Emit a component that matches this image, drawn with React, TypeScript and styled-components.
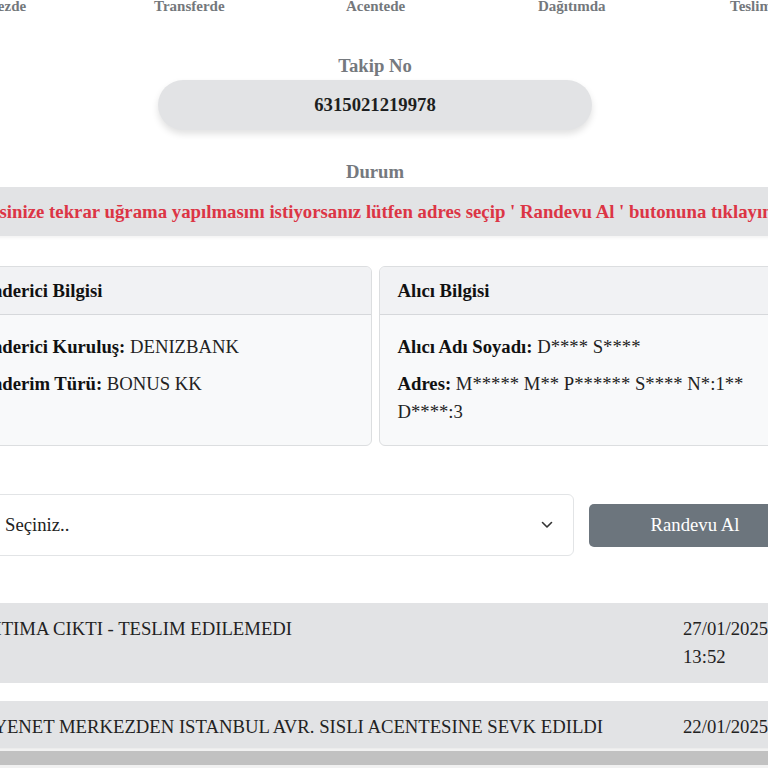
import React from 'react'
import styled, {createGlobalStyle} from 'styled-components'

const GlobalStyle = createGlobalStyle`
  html, body {
    margin: 0;
    padding: 0;
    background: #ffffff;
    overflow: hidden;
  }

  body {
    font-family: "Liberation Serif", "Times New Roman", serif;
    color: #212529;
  }

  * {
    box-sizing: border-box;
  }
`

// the text of the reference renders a bit wider than plain 18px
const TEXT = '18.7px'

const Page = styled.div`
  width: 1000px;
  margin: -4px 0 0 -125px;
`

const StatusRow = styled.div`
  width: 960px;
  margin: 0 auto;
  display: grid;
  grid-template-columns: repeat(5, 192px);
`

const StatusLabel = styled.div`
  padding-left: 67px;
  font-size: 15px;
  line-height: 20px;
  font-weight: 700;
  color: #74787c;
  white-space: nowrap;
`

const FieldLabel = styled.div<{$top: number}>`
  margin-top: ${(p) => p.$top}px;
  text-align: center;
  font-size: ${TEXT};
  line-height: 22px;
  font-weight: 700;
  color: #75797e;
`

const TrackingPill = styled.div`
  width: 434px;
  height: 50px;
  margin: 3px auto 0;
  border-radius: 25px;
  background: #e2e3e5;
  box-shadow: 0 4px 7px rgba(0, 0, 0, 0.12);
  display: flex;
  align-items: center;
  justify-content: center;
  font-size: ${TEXT};
  font-weight: 700;
  color: #1d1f21;
`

const Notice = styled.div`
  margin-top: 4px;
  height: 49px;
  background: #e2e3e5;
  box-shadow: 0 2px 3px rgba(0, 0, 0, 0.05);
  display: flex;
  align-items: center;
  justify-content: center;
  font-size: 18.8px;
  font-weight: 700;
  color: #dc3545;
  white-space: nowrap;
`

const Container = styled.div<{$top: number}>`
  width: 852px;
  margin: ${(p) => p.$top}px auto 0;
`

const CardGrid = styled.div`
  display: grid;
  grid-template-columns: 1fr 1fr;
  gap: 7px;
`

const Card = styled.div`
  border: 1px solid #dcdee0;
  border-radius: 6px;
  background: #f8f9fa;
  overflow: hidden;
  display: flex;
  flex-direction: column;
`

const CardHeader = styled.div`
  height: 48px;
  padding: 0 18px;
  display: flex;
  align-items: center;
  background: #f1f2f4;
  border-bottom: 1px solid #d6d8db;
  font-size: ${TEXT};
  font-weight: 700;
  color: #111;
`

const CardBody = styled.div`
  padding: 18px 18px 10px;
  font-size: ${TEXT};
  line-height: 28px;
  color: #222;

  p {
    margin: 0 0 9px;
  }

  strong {
    color: #111;
  }
`

const ActionRow = styled.div`
  display: grid;
  grid-template-columns: 1fr 212px;
  gap: 15px;
  align-items: center;
  padding-left: 42px;
`

const SelectBox = styled.div`
  height: 62px;
  border: 1px solid #e2e4e6;
  border-radius: 6px;
  background: #fff;
  display: flex;
  align-items: center;
  justify-content: space-between;
  padding: 0 20px 0 13px;
  font-size: ${TEXT};
  color: #222;
`

const ActionButton = styled.button`
  height: 43px;
  border: none;
  border-radius: 5px;
  background: #6c757d;
  color: #fff;
  font-family: inherit;
  font-size: ${TEXT};
`

const History = styled.div`
  margin-top: 47px;
  display: flex;
  flex-direction: column;
  gap: 18px;
`

const HistoryRow = styled.div`
  background: #e2e3e5;
  padding: 12px 80px;
  display: grid;
  grid-template-columns: 1fr 112px;
  gap: 16px;
  font-size: ${TEXT};
  line-height: 28px;
  color: #222;
`

const Scrollbar = styled.div`
  position: fixed;
  left: 0;
  right: 0;
  bottom: 0;
  height: 20px;
  background: #f1f1f1;
  border-top: 1px solid #ececec;
  padding: 2px 0 3px;
`

const ScrollThumb = styled.div`
  height: 100%;
  background: #c1c1c1;
`

const statuses = ['Merkezde', 'Transferde', 'Acentede', 'Dağıtımda', 'Teslim Edildi']

const history = [
  {text: 'DAGITIMA CIKTI - TESLIM EDILEMEDI', date: '27/01/2025 13:52'},
  {text: 'KURYENET MERKEZDEN ISTANBUL AVR. SISLI ACENTESINE SEVK EDILDI', date: '22/01/2025 10:14'},
]

const App: React.FC = () => {
  return (
    <>
      <GlobalStyle />
      <Page>
        <StatusRow>
          {statuses.map((s) => (
            <StatusLabel key={s}>{s}</StatusLabel>
          ))}
        </StatusRow>

        <FieldLabel $top={39}>Takip No</FieldLabel>
        <TrackingPill>6315021219978</TrackingPill>

        <FieldLabel $top={31}>Durum</FieldLabel>
        <Notice>
          Adresinize tekrar uğrama yapılmasını istiyorsanız lütfen adres seçip ' Randevu Al ' butonuna tıklayınız.
        </Notice>

        <Container $top={30}>
          <CardGrid>
            <Card>
              <CardHeader>Gönderici Bilgisi</CardHeader>
              <CardBody>
                <p>
                  <strong>Gönderici Kuruluş:</strong> DENIZBANK
                </p>
                <p>
                  <strong>Gönderim Türü:</strong> BONUS KK
                </p>
              </CardBody>
            </Card>
            <Card>
              <CardHeader>Alıcı Bilgisi</CardHeader>
              <CardBody>
                <p>
                  <strong>Alıcı Adı Soyadı:</strong> D**** S****
                </p>
                <p>
                  <strong>Adres:</strong> M***** M** P****** S**** N*:1** D****:3
                </p>
              </CardBody>
            </Card>
          </CardGrid>
        </Container>

        <Container $top={48}>
          <ActionRow>
            <SelectBox>
              <span>Seçiniz..</span>
              <svg width="12" height="8" viewBox="0 0 12 8" fill="none">
                <path d="M1.5 1.5 6 6l4.5-4.5" stroke="#333" strokeWidth="1.6" strokeLinecap="round" strokeLinejoin="round" />
              </svg>
            </SelectBox>
            <ActionButton>Randevu Al</ActionButton>
          </ActionRow>
        </Container>

        <History>
          {history.map((h) => (
            <HistoryRow key={h.text}>
              <div>{h.text}</div>
              <div>{h.date}</div>
            </HistoryRow>
          ))}
        </History>
      </Page>

      <Scrollbar>
        <ScrollThumb />
      </Scrollbar>
    </>
  )
}

export default App
